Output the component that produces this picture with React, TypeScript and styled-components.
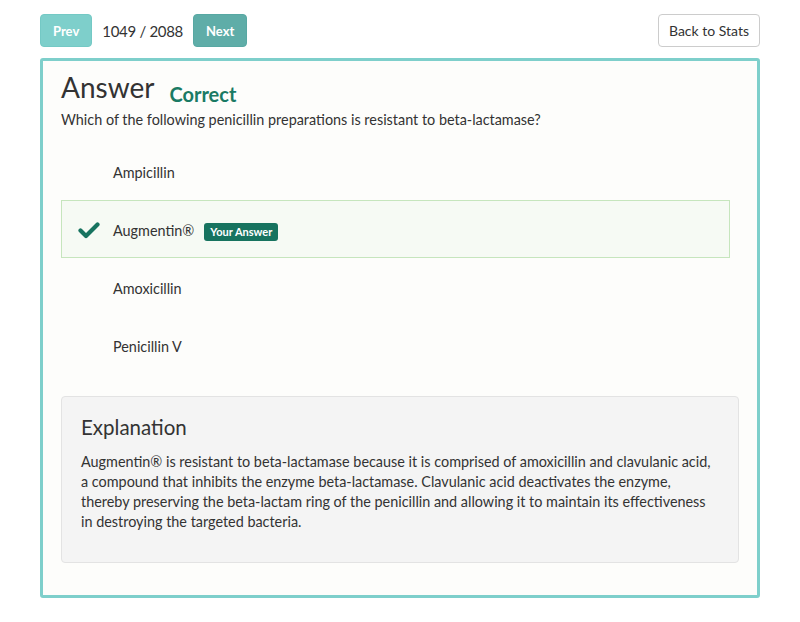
import React from "react";
import styled, { createGlobalStyle } from "styled-components";

const Global = createGlobalStyle`
  html, body { margin: 0; padding: 0; background: #ffffff; }
  body { font-family: Lato, "Open Sans", sans-serif; color: #333333; }
  * { box-sizing: border-box; }
`;

const Page = styled.div`
  width: 800px;
  padding: 14px 40px 0 40px;
`;

const Toolbar = styled.div`
  display: flex;
  align-items: center;
  height: 33px;
`;

const NavButton = styled.button<{ $dark?: boolean }>`
  height: 33px;
  padding: 0 12px;
  border: 1px solid ${(p) => (p.$dark ? "#58a8a3" : "#74c9c5")};
  border-radius: 4px;
  background: ${(p) => (p.$dark ? "#5fada8" : "#7ecfcb")};
  color: #ffffff;
  font-family: Lato, sans-serif;
  font-weight: 700;
  font-size: 13px;
`;

const Counter = styled.span`
  font-size: 15px;
  letter-spacing: -0.3px;
  margin: 0 10px;
  color: #333;
`;

const Spacer = styled.div`
  flex: 1;
`;

const BackButton = styled.button`
  height: 33px;
  padding: 0 10px;
  border: 1px solid #cccccc;
  border-radius: 4px;
  background: #ffffff;
  color: #333;
  font-family: Lato, sans-serif;
  font-size: 14px;
`;

const Card = styled.div`
  margin-top: 11px;
  height: 540px;
  border: 3px solid #7ecfcb;
  border-radius: 3px;
  background: #fdfdfb;
  padding: 8px 18px 0 18px;
`;

const TitleRow = styled.div`
  display: flex;
  align-items: baseline;
  gap: 15px;
`;

const Title = styled.h1`
  margin: 0;
  font-size: 28px;
  font-weight: 400;
  line-height: 36px;
`;

const Verdict = styled.span`
  font-size: 20px;
  font-weight: 700;
  color: #1a7a64;
  position: relative;
  top: 4px;
`;

const Question = styled.p`
  margin: 5px 0 0 0;
  font-size: 14.4px;
  line-height: 20px;
`;

const Options = styled.div`
  margin-top: 12px;
  padding-right: 9px;
  display: flex;
  flex-direction: column;
`;

const Option = styled.div<{ $selected?: boolean }>`
  height: 58px;
  padding-top: 3px;
  display: flex;
  align-items: center;
  border: 1px solid ${(p) => (p.$selected ? "#c6e5bd" : "transparent")};
  background: ${(p) => (p.$selected ? "#f6faf4" : "transparent")};
  font-size: 14.4px;
`;

const IconSlot = styled.div`
  width: 51px;
  padding-left: 16px;
  padding-bottom: 2px;
  display: flex;
  align-items: center;
`;

const Badge = styled.span`
  margin-left: 10px;
  margin-top: 2px;
  background: #17735f;
  color: #fff;
  font-size: 11px;
  font-weight: 700;
  padding: 3px 6px;
  border-radius: 3px;
  line-height: 12px;
`;

const Explanation = styled.div`
  margin-top: 22px;
  height: 167px;
  background: #f4f4f4;
  border: 1px solid #e3e3e3;
  border-radius: 4px;
  padding: 16px 19px;
`;

const ExpTitle = styled.h2`
  margin: 0;
  font-size: 20.5px;
  font-weight: 400;
  line-height: 28px;
`;

const ExpText = styled.p`
  margin: 11px 0 0 0;
  font-size: 14.4px;
  line-height: 20px;
`;

const Check = () => (
  <svg width="22" height="18" viewBox="0 0 22 18">
    <path d="M2.5 9.5 L8 15 L19.5 3.5" fill="none" stroke="#17735f" strokeWidth="4.2" strokeLinecap="round" strokeLinejoin="round" />
  </svg>
);

const options = [
  { text: "Ampicillin" },
  { text: "Augmentin®", selected: true },
  { text: "Amoxicillin" },
  { text: "Penicillin V" },
];

export default function App() {
  return (
    <Page>
      <Global />
      <Toolbar>
        <NavButton>Prev</NavButton>
        <Counter>1049 / 2088</Counter>
        <NavButton $dark>Next</NavButton>
        <Spacer />
        <BackButton>Back to Stats</BackButton>
      </Toolbar>
      <Card>
        <TitleRow>
          <Title>Answer</Title>
          <Verdict>Correct</Verdict>
        </TitleRow>
        <Question>Which of the following penicillin preparations is resistant to beta-lactamase?</Question>
        <Options>
          {options.map((o) => (
            <Option key={o.text} $selected={o.selected}>
              <IconSlot>{o.selected && <Check />}</IconSlot>
              {o.text}
              {o.selected && <Badge>Your Answer</Badge>}
            </Option>
          ))}
        </Options>
        <Explanation>
          <ExpTitle>Explanation</ExpTitle>
          <ExpText>
            Augmentin® is resistant to beta-lactamase because it is comprised of amoxicillin and clavulanic acid, a compound that inhibits the enzyme beta-lactamase. Clavulanic acid deactivates the enzyme, thereby preserving the beta-lactam ring of the penicillin and allowing it to maintain its effectiveness in destroying the targeted bacteria.
          </ExpText>
        </Explanation>
      </Card>
    </Page>
  );
}
